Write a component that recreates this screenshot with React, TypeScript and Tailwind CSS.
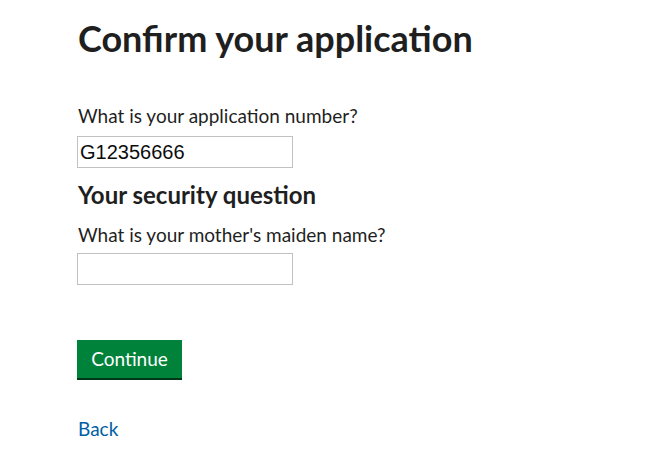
export default function App() {
  return (
    <div className="min-h-[454px] bg-white text-[#1f1f1f]" style={{ fontFamily: "Lato, 'Noto Sans', Arial, sans-serif" }}>
      <main className="pl-[78px] pt-[14px]">
        <h1 className="text-[36px] font-bold leading-[48px]">Confirm your application</h1>

        <form className="mt-[41px]">
          <label htmlFor="app-number" className="block text-[19px] leading-[25px]">
            What is your application number?
          </label>
          <input
            id="app-number"
            defaultValue="G12356666"
            className="ml-[-1px] mt-[8px] block h-[32px] w-[216px] border border-[#bfc1c3] px-[2px] text-[20px] text-[#0b0c0c] outline-none"
            style={{ fontFamily: "'Liberation Sans', Arial, sans-serif" }}
          />

          <h2 className="mt-[12px] text-[24px] font-bold leading-[30px]">Your security question</h2>
          <label htmlFor="maiden" className="mt-[12px] block text-[19px] leading-[25px]">
            What is your mother's maiden name?
          </label>
          <input
            id="maiden"
            className="ml-[-1px] mt-[6px] block h-[32px] w-[216px] border border-[#bfc1c3] px-[3px] text-[19px] outline-none"
          />

          <button
            type="button"
            className="ml-[-1px] mt-[55px] block h-[38px] w-[105px] bg-[#00823b] text-[19px] text-white shadow-[0_2px_0_#003618]"
          >
            Continue
          </button>
        </form>

        <a href="#" className="mt-[38px] inline-block text-[19px] leading-[25px] text-[#005ea5]">
          Back
        </a>
      </main>
    </div>
  )
}
